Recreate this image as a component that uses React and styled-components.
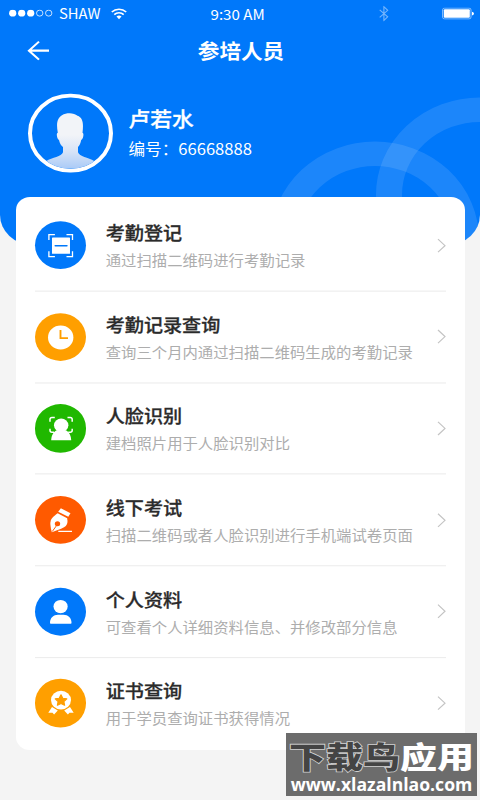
import React from 'react';
import styled, { createGlobalStyle } from 'styled-components';

const GlobalStyle = createGlobalStyle`
    * {
        box-sizing: border-box;
    }

    body {
        margin: 0;
        background-color: #f4f4f4;
        font-family: 'Noto Sans CJK SC', sans-serif;
    }
`;

const Viewport = styled.div`
    position: relative;
    width: 480px;
    height: 800px;
    overflow: hidden;
`;

// 750x1334 design fitted to a 480x800 screen
const Screen = styled.div`
    width: 480px;
    height: 853.33px;
    transform: scaleY(0.9375);
    transform-origin: top left;
    background-color: #f4f4f4;
`;

const Hero = styled.header`
    position: relative;
    height: 261px;
    overflow: hidden;
    border-radius: 0 0 32px 32px;
    background-color: #0078fa;
    color: #fff;
`;

const Ring = styled.div`
    position: absolute;
    left: ${({ $left }) => $left}px;
    top: ${({ $top }) => $top}px;
    width: 208.4px;
    height: 208.4px;
    border: 26px solid rgba(255, 255, 255, 0.11);
    border-radius: 50%;
`;

const StatusBar = styled.div`
    display: grid;
    grid-template-columns: 201.5px auto 1fr;
    align-items: center;
    height: 28px;
    padding: 0 6px 0 9px;
    font-size: 15.1px;
    line-height: 28px;
`;

const StatusGroup = styled.div`
    display: flex;
    align-items: center;
    justify-content: ${({ $end }) => ($end ? 'flex-end' : 'flex-start')};
    gap: ${({ $gap }) => $gap}px;
`;

const Carrier = styled.span`
    margin-right: 4px;
    font-size: 14.8px;
`;

const NavBar = styled.div`
    display: grid;
    grid-template-columns: 60px 1fr 60px;
    align-items: center;
    height: 51px;
`;

const BackButton = styled.button`
    display: flex;
    padding: 0 0 0 27px;
    border: none;
    background: none;
    color: inherit;
`;

const PageTitle = styled.h1`
    margin: 0;
    padding-left: 2px;
    text-align: center;
    font-size: 21.6px;
    font-weight: 700;
    line-height: 32px;
`;

const Profile = styled.div`
    display: flex;
    align-items: center;
    gap: 16px;
    padding: 20.7px 28px 0;
`;

const Avatar = styled.div`
    width: 84.5px;
    height: 84.5px;
    overflow: hidden;
    border: 4px solid #fff;
    border-radius: 50%;
`;

const Name = styled.div`
    font-size: 21.7px;
    font-weight: 500;
    line-height: 32px;
    -webkit-text-stroke: 0.3px;
`;

const Number = styled.div`
    padding-top: 1px;
    font-size: 16.6px;
    line-height: 31px;
`;

const Card = styled.main`
    position: relative;
    width: 449px;
    height: 589.5px;
    margin: -51px 0 0 15.5px;
    padding: 3.2px 19px 0;
    border-radius: 14px;
    background-color: #fff;
`;

const Row = styled.div`
    display: flex;
    align-items: center;
    height: 97.7px;
    border-bottom: 1px solid #e9e9e9;

    &:last-child {
        border-bottom-color: transparent;
    }
`;

const IconCircle = styled.div`
    display: flex;
    flex-shrink: 0;
    width: 51.2px;
    height: 51.2px;
    border-radius: 50%;
    background-color: ${({ $color }) => $color};
`;

const RowText = styled.div`
    flex: 1;
    margin-left: 20px;
    padding-top: 2px;
    white-space: nowrap;
`;

const RowTitle = styled.div`
    color: #2b2b2b;
    font-size: 19.1px;
    font-weight: 500;
    line-height: 30px;
    -webkit-text-stroke: 0.3px;
`;

const RowHint = styled.div`
    color: #adadad;
    font-size: 15.36px;
    line-height: 29px;
`;

const Watermark = styled.div`
    position: absolute;
    left: 286px;
    top: 733px;
    display: flex;
    flex-direction: column;
    align-items: center;
    width: 191px;
    height: 63px;
    background-color: #6c6c6c;
    color: #fff;
`;

const Brand = styled.div`
    height: 41px;
    white-space: nowrap;
    font-size: 37px;
    font-weight: 900;
    line-height: 47px;
    transform: scaleY(0.8);
`;

const Outlined = styled.span`
    color: #444;
    paint-order: stroke fill;
    -webkit-text-stroke: 2px #d0d0d0;
`;

const Site = styled.div`
    white-space: nowrap;
    font-family: 'Open Sans', 'Noto Sans', sans-serif;
    font-size: 17.6px;
    font-weight: 700;
    line-height: 20px;
`;

const Wifi = () => (
    <svg width='16' height='13' viewBox='0 0 16 13' fill='none' stroke='#fff' strokeWidth='1.7'>
        <path d='M.8 4.8a10.2 10.2 0 0 1 14.4 0M3.3 7.6a6.6 6.6 0 0 1 9.4 0' />
        <path d='M5.5 9.7a3.600 3.600 0 0 1 5 0L8 12.4z' fill='#fff' stroke='none' />
    </svg>
);

const Signal = () => (
    <svg width='44' height='8' viewBox='0 0 44 8' fill='#fff'>
        <circle cx='3.7' cy='4' r='3.6' />
        <circle cx='12.7' cy='4' r='3.6' />
        <circle cx='21.7' cy='4' r='3.6' />
        <g fill='none' stroke='#fff' strokeWidth='0.8'>
            <circle cx='30.7' cy='4' r='3.2' />
            <circle cx='39.7' cy='4' r='3.2' />
        </g>
    </svg>
);

const Bluetooth = () => (
    <svg width='10' height='17' viewBox='0 0 10 17' fill='none' stroke='#75b5fc' strokeWidth='1.1'>
        <path d='M.7 4.5l8 7.5-3.8 3.8V1.2L8.7 5l-8 7.5' />
    </svg>
);

const Battery = () => (
    <svg width='32' height='13' viewBox='0 0 32 13'>
        <rect x='.6' y='.6' width='28.4' height='11.6' rx='2' fill='none' stroke='#8ec3fd' />
        <rect x='1.8' y='1.9' width='26' height='9' rx='1' fill='#fff' />
        <path d='M30 4.5q2 .4 2 2t-2 2z' fill='#fff' />
    </svg>
);

const BackArrow = () => (
    <svg width='23' height='22' viewBox='0 0 23 22' fill='none' stroke='#fff' strokeWidth='2.2'>
        <path d='M12 1.4L2 11l10 9.6M2 11h20' />
    </svg>
);

const Person = () => (
    <svg width='76.5' height='76.5' viewBox='0 0 76.5 76.5'>
        <defs>
            <linearGradient id='body' x1='0' y1='16' x2='0' y2='76' gradientUnits='userSpaceOnUse'>
                <stop offset='0.4' stopColor='#f2f4f8' />
                <stop offset='0.7' stopColor='#d6e3f7' />
                <stop offset='1' stopColor='#a9caf7' />
            </linearGradient>
        </defs>
        <path
            fill='url(#body)'
            d='M25.800 37.500C24 27 25.500 21.500 30 18.800C34.500 16 42 16 45.500 19.500C50.500 21.500 51.800 26.500 50.500 37.500C52.300 37.800 51.300 44.800 49.200 45.200C48.600 48.800 47.500 50.800 46 52.800V58.500C47.500 63.500 56 63.500 62.500 68L66 72V77H10V72L14 68C20.500 63.500 29.500 63.500 31 58.500V52.800C29 50.800 27.700 48.800 27 45.200C25 44.800 23.900 37.800 25.800 37.500Z'
        />
    </svg>
);

const ScanIcon = () => (
    <svg viewBox='0 0 51.2 51.2'>
        <path
            d='M13.9 20v-5.8h6M31.5 14.2h6V20M37.500 32v5.800h-6M19.900 37.800h-6V32'
            fill='none'
            stroke='#fff'
            strokeWidth='1.3'
        />
        <rect x='17' y='17.3' width='18' height='17.500' rx='.5' fill='#fff' />
        <path d='M20.3 26.200h11.600' stroke='#0078fa' strokeWidth='1.700' strokeLinecap='round' />
    </svg>
);

const ClockIcon = () => (
    <svg viewBox='0 0 51.2 51.2'>
        <circle cx='25.700' cy='26' r='12.700' fill='#fff' />
        <path d='M25.500 18v8.700h7.500' fill='none' stroke='#ff9f00' strokeWidth='1.900' />
    </svg>
);

const FaceIcon = () => (
    <svg viewBox='0 0 51.2 51.2' fill='#fff'>
        <path
            d='M15 18.800v-2.500q0-2 2-2h2.800M32.500 14.300h2.700q2 0 2 2v2.500M37.200 26.300v2q0 1.700-2 1.700h-2M15 26.300v2q0 1.700 2 1.700h2'
            fill='none'
            stroke='#fff'
            strokeWidth='1.500'
        />
        <circle cx='26.200' cy='22.500' r='7.200' />
        <path d='M21.500 28h9.500c4 2.500 4.900 6.500 5.200 10.500H16.200c.2-4 1.300-8 5.300-10.500z' />
    </svg>
);

const PenIcon = () => (
    <svg viewBox='0 0 51.2 51.2'>
        <path d='M25.900 13.200L35.500 18.500 33.300 22.100 23.200 16.900Z' fill='#fff' />
        <path
            d='M22.600 18.500L32.200 23.700Q33.200 29 30.800 32.200Q28.500 34.800 16.800 38.700Q14.600 30.500 15.800 26Q17 23 22.600 18.500Z'
            fill='#fff'
        />
        <circle cx='22.500' cy='29.700' r='2.700' fill='#ff5a00' />
        <path d='M22 31L17.200 38' stroke='#ff5a00' strokeWidth='1' />
        <path d='M23.300 37.800H37' stroke='#fff' strokeWidth='1.200' />
    </svg>
);

const UserIcon = () => (
    <svg viewBox='0 0 51.2 51.2' fill='#fff'>
        <circle cx='25.600' cy='20' r='7.100' />
        <path d='M15 37.500c0-5.500 3.500-8.700 8-8.700h5.500c4.500 0 8 3.200 8 8.700q0 .8-.8.8H15.800q-.8 0-.8-.8z' />
    </svg>
);

const MedalIcon = () => (
    <svg viewBox='0 0 51.2 51.2' fill='#fff'>
        <circle cx='26' cy='22.700' r='10' />
        <path
            d='M26 17.200l1.800 3.600 4 .6-2.900 2.900.7 4-3.600-1.900-3.600 1.900.7-4-2.900-2.900 4-.6z'
            fill='#ff9f00'
            stroke='#ff9f00'
            strokeWidth='1.200'
            strokeLinejoin='round'
        />
        <path d='M17 30.200l5.800 3.700-3.700 4.300-1.600-2-4.200.2zM35 30.200l-5.800 3.700 3.700 4.300 1.600-2 4.200.2z' />
    </svg>
);

const Chevron = () => (
    <svg width='9' height='16' viewBox='0 0 9 16' fill='none' stroke='#c4c4c4' strokeWidth='1.2'>
        <path d='M1 1l7 7-7 7' />
    </svg>
);

const menu = [
    { title: '考勤登记', hint: '通过扫描二维码进行考勤记录', color: '#0078fa', Icon: ScanIcon },
    { title: '考勤记录查询', hint: '查询三个月内通过扫描二维码生成的考勤记录', color: '#ff9f00', Icon: ClockIcon },
    { title: '人脸识别', hint: '建档照片用于人脸识别对比', color: '#20b800', Icon: FaceIcon },
    { title: '线下考试', hint: '扫描二维码或者人脸识别进行手机端试卷页面', color: '#ff5a00', Icon: PenIcon },
    { title: '个人资料', hint: '可查看个人详细资料信息、并修改部分信息', color: '#0078fa', Icon: UserIcon },
    { title: '证书查询', hint: '用于学员查询证书获得情况', color: '#ff9f00', Icon: MedalIcon },
];

const App = () => {
    return (
        <Viewport>
            <GlobalStyle />
            <Screen>
                <Hero>
                    <Ring $left={270.8} $top={150.9} />
                    <Ring $left={375.5} $top={103.5} />
                    <StatusBar>
                        <StatusGroup $gap={6}>
                            <Signal />
                            <Carrier>SHAW</Carrier>
                            <Wifi />
                        </StatusGroup>
                        <span>9:30 AM</span>
                        <StatusGroup $end $gap={53}>
                            <Bluetooth />
                            <Battery />
                        </StatusGroup>
                    </StatusBar>
                    <NavBar>
                        <BackButton>
                            <BackArrow />
                        </BackButton>
                        <PageTitle>参培人员</PageTitle>
                    </NavBar>
                    <Profile>
                        <Avatar>
                            <Person />
                        </Avatar>
                        <div>
                            <Name>卢若水</Name>
                            <Number>编号：66668888</Number>
                        </div>
                    </Profile>
                </Hero>
                <Card>
                    {menu.map(({ title, hint, color, Icon }) => (
                        <Row key={title}>
                            <IconCircle $color={color}>
                                <Icon />
                            </IconCircle>
                            <RowText>
                                <RowTitle>{title}</RowTitle>
                                <RowHint>{hint}</RowHint>
                            </RowText>
                            <Chevron />
                        </Row>
                    ))}
                </Card>
            </Screen>
            <Watermark>
                <Brand>
                    <Outlined>下载鸟</Outlined>应用
                </Brand>
                <Site>www.xlazalnlao.com</Site>
            </Watermark>
        </Viewport>
    );
};

export default App;
